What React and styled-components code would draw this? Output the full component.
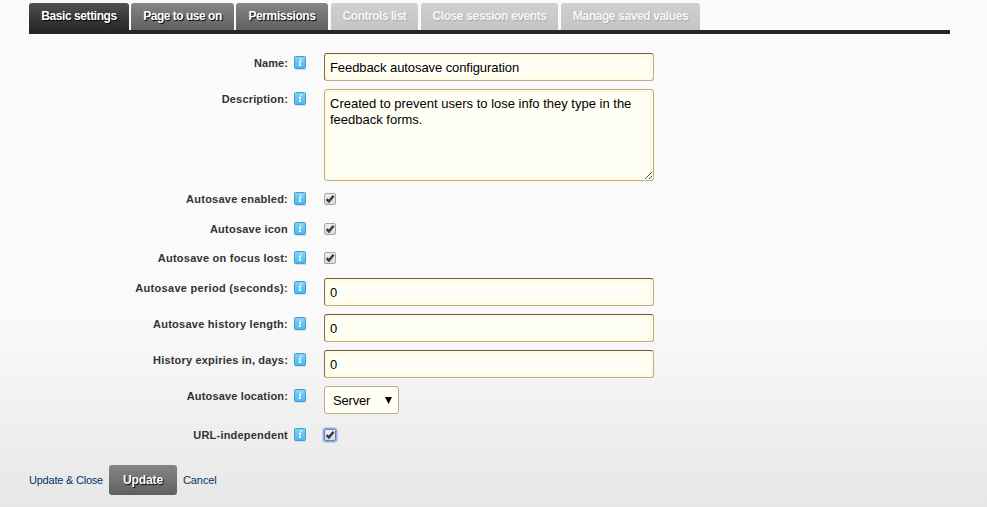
import React from "react";
import styled, { createGlobalStyle, css } from "styled-components";

const GlobalStyle = createGlobalStyle`
  body {
    margin: 0;
    background: #fafafa;
    font-family: "Liberation Sans", Arial, sans-serif;
  }
  * { box-sizing: border-box; }
`;

const Page = styled.main`
  height: 507px;
  padding: 3px 37px 0 29px;
  overflow: hidden;
  background: linear-gradient(to bottom, #fafafa 0, #fafafa 315px, #e7e7e7 507px);
`;

const TabBar = styled.nav`
  display: flex;
  height: 31px;
  border-bottom: 4px solid #272727;
`;

const tones = {
  active: css`
    background: linear-gradient(#505050, #272727);
    color: #fff;
    text-shadow: 1px 1px 1px #000;
  `,
  normal: css`
    background: linear-gradient(#858585, #606060);
    color: #fff;
    text-shadow: 1px 1px 1px #000;
  `,
  disabled: css`
    background: linear-gradient(#d0d0d0, #c4c4c4);
    color: #f6f6f6;
    text-shadow: 1px 1px 1px #aaa;
  `,
};

const Tab = styled.button`
  width: ${(p) => p.$width}px;
  height: 27px;
  margin: 0 ${(p) => p.$gap}px 0 0;
  padding: 0;
  border: 0;
  border-radius: 3px 3px 0 0;
  font: bold 12px/27px "Liberation Sans", Arial, sans-serif;
  letter-spacing: ${(p) => p.$spacing}px;
  white-space: nowrap;
  ${(p) => tones[p.$tone]}
`;

const Form = styled.form`
  display: flex;
  flex-direction: column;
  padding-top: 19px;
`;

const Row = styled.div`
  display: grid;
  grid-template-columns: 259px 36px 330px;
  align-items: start;
  height: ${(p) => p.$height}px;
`;

const Label = styled.label`
  padding-top: 3px;
  text-align: right;
  font-size: 11px;
  font-weight: bold;
  line-height: 14px;
  letter-spacing: ${(p) => p.$spacing}px;
  white-space: nowrap;
  color: #333;
`;

const InfoIcon = styled.svg`
  display: block;
  width: 14px;
  height: 15px;
  margin: 2px 0 0 6px;
`;

const field = css`
  display: block;
  width: 330px;
  margin: 0;
  border: 1px solid #b9b086;
  border-radius: 3px;
  outline: 0;
  background: #fffff5;
  box-shadow: inset 0 0 6px 1px #fff6d2;
  color: #000;
  font-family: "Liberation Sans", Arial, sans-serif;
`;

const Input = styled.input`
  ${field}
  height: 28px;
  padding: 0 5px;
  border-color: #655f45 #b9b086 #b9b086 #777052;
  font-size: 13px;
  letter-spacing: -0.08px;
`;

const TextArea = styled.textarea`
  ${field}
  height: 92px;
  padding: 6px 5px;
  font-size: 13px;
  line-height: 16px;
  resize: none;
`;

const AreaWrap = styled.div`
  position: relative;
`;

const ResizeGrip = styled.svg`
  position: absolute;
  right: 1px;
  bottom: 1px;
`;

const CheckBox = styled.span`
  display: block;
  width: 12px;
  height: 12px;
  margin-top: 4px;
  border: 1px solid #a6a6a6;
  border-radius: 2px;
  background: linear-gradient(#eee, #dcdcdc);
  ${(p) =>
    p.$focused &&
    css`
      border-color: #6c7fae;
      box-shadow: 0 0 0 1.5px #8db0f4;
    `}
  svg {
    display: block;
    width: 10px;
    height: 10px;
    overflow: visible;
  }
`;

const Select = styled.div`
  display: flex;
  align-items: center;
  justify-content: space-between;
  width: 75px;
  height: 28px;
  padding: 0 6px 0 8px;
  border: 1px solid #b9b086;
  border-radius: 3px;
  background: #fffff5;
  font-size: 13px;
  letter-spacing: -0.2px;
`;

const Actions = styled.footer`
  display: flex;
  align-items: center;
  height: 30px;
`;

const Link = styled.a`
  width: ${(p) => p.$width}px;
  color: #003366;
  font-size: 11px;
  line-height: 14px;
  letter-spacing: ${(p) => p.$spacing}px;
  white-space: nowrap;
`;

const UpdateButton = styled.button`
  width: 68px;
  height: 30px;
  margin-right: 6px;
  padding: 0;
  border: 0;
  border-radius: 3px;
  background: linear-gradient(#858585, #606060);
  color: #fff;
  font: bold 12px "Liberation Sans", Arial, sans-serif;
  letter-spacing: -0.1px;
  text-shadow: 1px 1px 1px #000;
`;

const Info = () => (
  <InfoIcon viewBox="0 0 14 15" aria-hidden="true">
    <defs>
      <linearGradient id="info" x1="0" y1="0" x2="0" y2="1">
        <stop offset="0" stopColor="#8bd2f2" />
        <stop offset="1" stopColor="#48b9f0" />
      </linearGradient>
    </defs>
    <path d="M1 14.3h11" stroke="#d4d4d4" />
    <rect x="0.5" y="1.5" width="11" height="12" rx="1" fill="url(#info)" stroke="#3aa0d8" />
    <path d="M5 6.4h1.6L5.4 10.4h1.5" fill="none" stroke="#fff" strokeWidth="1.1" />
    <path d="M6.3 4.2h1.4" stroke="#fff" strokeWidth="1.2" />
  </InfoIcon>
);

const Check = ({ focused }) => (
  <CheckBox role="checkbox" aria-checked="true" $focused={focused}>
    <svg viewBox="0 0 10 10">
      <path d="M1.6 5.2 3.9 7.5 8.6 1.8" fill="none" stroke="#3c3c3c" strokeWidth="2.5" />
    </svg>
  </CheckBox>
);

const tabs = [
  ["Basic settings", "active", 100, 2, -0.43],
  ["Page to use on", "normal", 103, 2, -0.48],
  ["Permissions", "normal", 92, 3, -0.38],
  ["Controls list", "disabled", 87, 3, -0.48],
  ["Close session events", "disabled", 137, 3, -0.4],
  ["Manage saved values", "disabled", 139, 0, -0.38],
];

const Field = ({ label, height, spacing, children }) => (
  <Row $height={height}>
    <Label $spacing={spacing}>{label}</Label>
    <Info />
    {children}
  </Row>
);

export default function App() {
  return (
    <Page>
      <GlobalStyle />
      <TabBar>
        {tabs.map(([text, tone, width, gap, spacing]) => (
          <Tab key={text} $tone={tone} $width={width} $gap={gap} $spacing={spacing}>
            {text}
          </Tab>
        ))}
      </TabBar>
      <Form>
        <Field label="Name:" height={36} spacing={0.1}>
          <Input defaultValue="Feedback autosave configuration" />
        </Field>
        <Field label="Description:" height={100} spacing={0.18}>
          <AreaWrap>
            <TextArea
              defaultValue={"Created to prevent users to lose info they type in the\nfeedback forms."}
            />
            <ResizeGrip width="9" height="9" viewBox="0 0 9 9">
              <path d="M1 8 8 1M5 8l3-3" stroke="#555" fill="none" />
            </ResizeGrip>
          </AreaWrap>
        </Field>
        <Field label="Autosave enabled:" height={30} spacing={0.24}><Check /></Field>
        <Field label="Autosave icon" height={29} spacing={0.22}><Check /></Field>
        <Field label="Autosave on focus lost:" height={30} spacing={0.24}><Check /></Field>
        <Field label="Autosave period (seconds):" height={36} spacing={0.3}><Input defaultValue="0" /></Field>
        <Field label="Autosave history length:" height={36} spacing={0.25}><Input defaultValue="0" /></Field>
        <Field label="History expiries in, days:" height={36} spacing={0.18}><Input defaultValue="0" /></Field>
        <Field label="Autosave location:" height={39} spacing={0.16}>
          <Select>
            Server
            <svg width="7" height="7" viewBox="0 0 7 7"><path d="M0 0h7L3.5 7z" /></svg>
          </Select>
        </Field>
        <Field label="URL-independent" height={40} spacing={0.2}><Check focused /></Field>
      </Form>
      <Actions>
        <Link $width={80} $spacing={-0.22}>Update &amp; Close</Link>
        <UpdateButton>Update</UpdateButton>
        <Link $width={40} $spacing={-0.1}>Cancel</Link>
      </Actions>
    </Page>
  );
}
